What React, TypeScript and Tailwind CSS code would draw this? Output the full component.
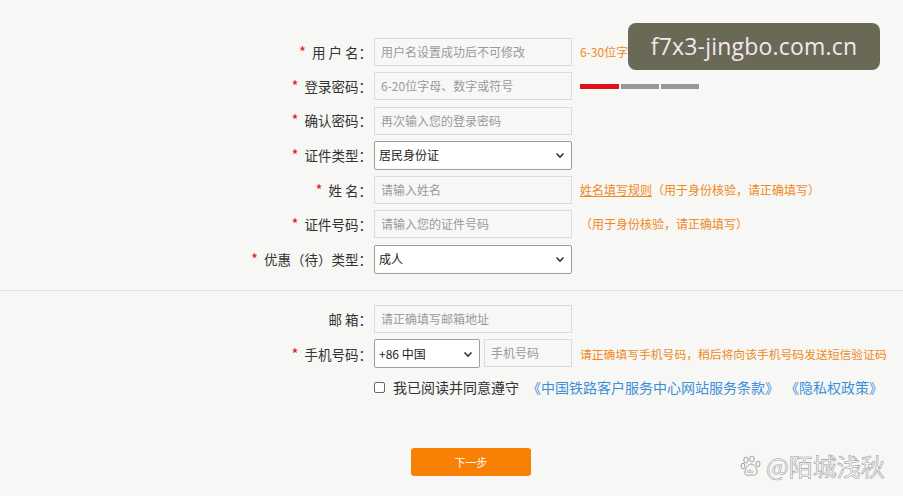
import React from 'react';

const cjk = "font-['Noto_Sans_CJK_SC','Noto_Sans',sans-serif]";

function Label({ text, req = true }: { text: string; req?: boolean }) {
  return (
    <div className="w-[372px] shrink-0 mr-[2px] text-right text-[13.5px] text-[#333] whitespace-pre">
      {req && <span className="text-[#e02020] text-[15px] mr-[6px]">*</span>}
      {text}
    </div>
  );
}

function Input({ ph, w = 'w-[198px]' }: { ph: string; w?: string }) {
  return (
    <div className={`${w} h-[28px] border border-[#dcdcdc] bg-[#f7f7f7] flex items-center px-[6px] text-[12px] text-[#9a9a9a]`}>
      {ph}
    </div>
  );
}

function Select({ value, w = 'w-[198px]' }: { value: string; w?: string }) {
  return (
    <div className={`${w} h-[29px] border border-[#9e9e9e] rounded-[2px] bg-white flex items-center justify-between px-[4px] text-[12px] text-[#222]`}>
      <span>{value}</span>
      <svg width="10" height="10" viewBox="0 0 10 10" className="mr-[2px]">
        <path d="M1.5 3.5 L5 7 L8.5 3.5" fill="none" stroke="#333" strokeWidth="1.6" />
      </svg>
    </div>
  );
}

function Row({ children }: { children: React.ReactNode }) {
  return <div className="flex items-center">{children}</div>;
}

function Hint({ children }: { children: React.ReactNode }) {
  return <div className="ml-[8px] text-[12px] text-[#ee8a1c] whitespace-nowrap">{children}</div>;
}

export default function App() {
  return (
    <div className={`relative w-[903px] h-[496px] overflow-hidden bg-[#f7f7f6] ${cjk}`}>
      <div className="pt-[38px] flex flex-col gap-[6.3px]">
        <Row>
          <Label text="用 户 名：" />
          <Input ph="用户名设置成功后不可修改" />
          <Hint>6-30位字母、数字或“_”，字母开头</Hint>
        </Row>
        <Row>
          <Label text="登录密码：" />
          <Input ph="6-20位字母、数字或符号" />
          <div className="ml-[8px] flex gap-[2px]">
            <div className="w-[39px] h-[5px] bg-[#e0101a]" />
            <div className="w-[38px] h-[5px] bg-[#979797]" />
            <div className="w-[38px] h-[5px] bg-[#979797]" />
          </div>
        </Row>
        <Row>
          <Label text="确认密码：" />
          <Input ph="再次输入您的登录密码" />
        </Row>
        <Row>
          <Label text="证件类型：" />
          <Select value="居民身份证" />
        </Row>
        <Row>
          <Label text="姓 名：" />
          <Input ph="请输入姓名" />
          <Hint>
            <span className="underline">姓名填写规则</span>（用于身份核验，请正确填写）
          </Hint>
        </Row>
        <Row>
          <Label text="证件号码：" />
          <Input ph="请输入您的证件号码" />
          <Hint>（用于身份核验，请正确填写）</Hint>
        </Row>
        <Row>
          <Label text="优惠（待）类型：" />
          <Select value="成人" />
        </Row>
      </div>

      <div className="mt-[16px] h-px bg-[#e2e2e2]" />

      <div className="pt-[14px] flex flex-col gap-[6.5px]">
        <Row>
          <Label text="邮 箱：" req={false} />
          <Input ph="请正确填写邮箱地址" />
        </Row>
        <Row>
          <Label text="手机号码：" />
          <div className="flex gap-[4px]">
            <Select value="+86 中国" w="w-[106px]" />
            <Input ph="手机号码" w="w-[88px]" />
          </div>
          <Hint>
            <span className="text-[11.8px]">请正确填写手机号码，稍后将向该手机号码发送短信验证码</span>
          </Hint>
        </Row>
      </div>

      <div className="mt-[9px] pl-[374px] flex items-center text-[14px]">
        <div className="w-[11px] h-[11px] border border-[#666] rounded-[2px] bg-white mr-[8px]" />
        <span className="text-[#333]">我已阅读并同意遵守</span>
        <span className="ml-[8px] text-[#3b8fd9]">《中国铁路客户服务中心网站服务条款》</span>
        <span className="ml-[6px] text-[#3b8fd9]">《隐私权政策》</span>
      </div>

      <div className="mt-[50px] pl-[411px]">
        <div className="w-[120px] h-[28px] rounded-[3px] bg-[#f88004] flex items-center justify-center text-[11px] text-white">
          下一步
        </div>
      </div>

      <div className="absolute left-[628px] top-[23px] w-[252px] h-[47px] rounded-[8px] bg-[#696955] flex items-center justify-center">
        <span className="font-['Open_Sans',sans-serif] text-[23px] text-[#f3e6f2] tracking-[0.2px]">f7x3-jingbo.com.cn</span>
      </div>

      <div className="absolute left-[740px] top-[448px] flex items-center gap-[4px] text-[24px] text-[#fbfbfb] [-webkit-text-stroke:0.6px_#a0a0a0]">
        <svg width="22" height="22" viewBox="0 0 22 22">
          <g fill="none" stroke="#a0a0a0" strokeWidth="1">
            <ellipse cx="6" cy="5" rx="2.2" ry="3" />
            <ellipse cx="12" cy="4" rx="2.2" ry="3" />
            <ellipse cx="3" cy="11" rx="2" ry="2.8" />
            <ellipse cx="18" cy="9" rx="2" ry="2.8" />
            <path d="M5 18 C5 12 9 9 11 9 C14 9 17 13 17 17 C17 21 13 20 11 20 C8 20 5 21 5 18 Z" />
          </g>
          <text x="7" y="18" fontSize="6" fill="#a0a0a0" fontFamily="Liberation Sans">du</text>
        </svg>
        <span>@陌城浅秋</span>
      </div>
    </div>
  );
}
